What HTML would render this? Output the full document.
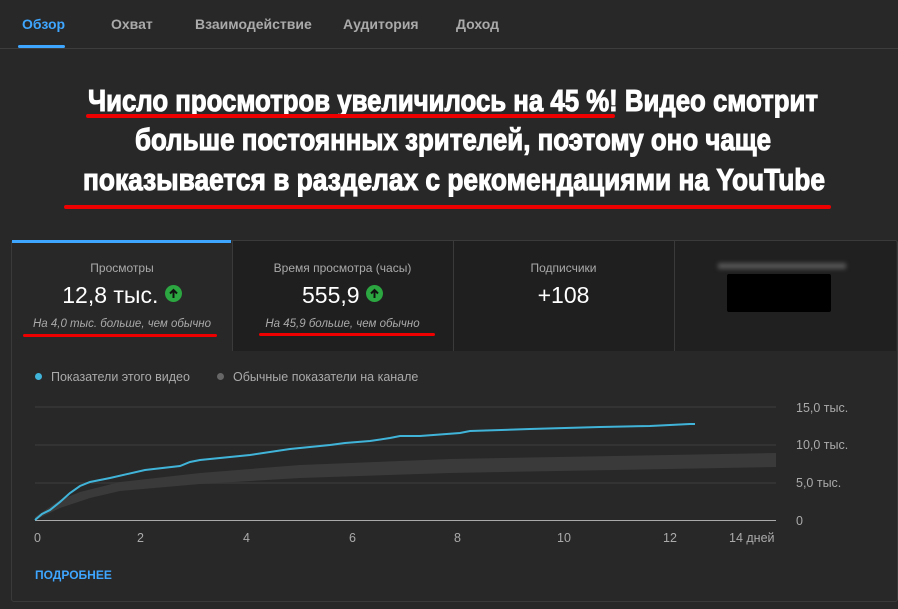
<!DOCTYPE html>
<html><head><meta charset="utf-8"><style>
body{margin:0;background:#282828;width:898px;height:609px;overflow:hidden;font-family:"Liberation Sans",sans-serif;color:#fff;position:relative}
.abs{position:absolute}
.tab{position:absolute;top:16px;font-size:14px;font-weight:bold;color:#aaa}
.hl{font-family:"Liberation Sans",sans-serif;font-weight:700;font-size:31px;fill:#fff;stroke:#fff;stroke-width:1.1px}
</style></head><body>
<div class="tab" style="left:22px;color:#3ea6ff">Обзор</div>
<div class="tab" style="left:111px">Охват</div>
<div class="tab" style="left:195px">Взаимодействие</div>
<div class="tab" style="left:343px">Аудитория</div>
<div class="tab" style="left:456px">Доход</div>
<div class="abs" style="left:18px;top:45px;width:47px;height:3px;background:#3ea6ff;border-radius:2px"></div>
<div class="abs" style="left:0;top:48px;width:898px;height:1px;background:#3d3d3d"></div>

<svg class="abs" style="left:0;top:0" width="898" height="240">
<text class="hl" x="88" y="111" textLength="730" lengthAdjust="spacingAndGlyphs">Число просмотров увеличилось на 45 %! Видео смотрит</text>
<text class="hl" x="135" y="150" textLength="636" lengthAdjust="spacingAndGlyphs">больше постоянных зрителей, поэтому оно чаще</text>
<text class="hl" x="83" y="190" textLength="742" lengthAdjust="spacingAndGlyphs">показывается в разделах с рекомендациями на YouTube</text>
<rect x="86" y="114" width="529" height="4" rx="2" fill="#e00"/>
<rect x="64" y="205" width="767" height="4" rx="2" fill="#e00"/>
</svg>

<div class="abs" style="left:11px;top:240px;width:885px;height:360px;border:1px solid #3a3a3a;border-radius:3px;background:#282828"></div>
<div class="abs" style="left:232px;top:241px;width:221px;height:110px;background:#1f1f1f;border-left:1px solid #3a3a3a"></div>
<div class="abs" style="left:453px;top:241px;width:221px;height:110px;background:#1f1f1f;border-left:1px solid #3a3a3a"></div>
<div class="abs" style="left:674px;top:241px;width:221px;height:110px;background:#202020;border-left:1px solid #3a3a3a"></div>
<div class="abs" style="left:12px;top:240px;width:219px;height:3px;background:#3ea6ff"></div>

<div class="abs" style="left:12px;top:261px;width:220px;text-align:center;font-size:12px;color:#aaa">Просмотры</div>
<div class="abs" style="left:12px;top:282px;width:220px;text-align:center;font-size:23px">12,8 тыс. <span style="display:inline-block;width:17px;height:17px;border-radius:50%;background:#2ba640;vertical-align:1px;position:relative"><svg width="17" height="17" style="position:absolute;left:0;top:0"><path d="M8.5 13V5M5 8.5l3.5-3.5 3.5 3.5" stroke="#111" stroke-width="2" fill="none"/></svg></span></div>
<div class="abs" style="left:12px;top:318px;width:220px;text-align:center;font-size:11.5px;font-style:italic;color:#aaa">На 4,0 тыс. больше, чем обычно</div>
<div class="abs" style="left:23px;top:334px;width:194px;height:3px;background:#e00;border-radius:2px"></div>

<div class="abs" style="left:232px;top:261px;width:221px;text-align:center;font-size:12px;color:#aaa">Время просмотра (часы)</div>
<div class="abs" style="left:232px;top:282px;width:221px;text-align:center;font-size:23px">555,9 <span style="display:inline-block;width:17px;height:17px;border-radius:50%;background:#2ba640;vertical-align:1px;position:relative"><svg width="17" height="17" style="position:absolute;left:0;top:0"><path d="M8.5 13V5M5 8.5l3.5-3.5 3.5 3.5" stroke="#111" stroke-width="2" fill="none"/></svg></span></div>
<div class="abs" style="left:232px;top:318px;width:221px;text-align:center;font-size:11.5px;font-style:italic;color:#aaa">На 45,9 больше, чем обычно</div>
<div class="abs" style="left:259px;top:333px;width:176px;height:3px;background:#e00;border-radius:2px"></div>

<div class="abs" style="left:453px;top:261px;width:221px;text-align:center;font-size:12px;color:#aaa">Подписчики</div>
<div class="abs" style="left:453px;top:282px;width:221px;text-align:center;font-size:23px">+108</div>

<div class="abs" style="left:718px;top:263px;width:128px;height:6px;background:#555;filter:blur(2px)"></div>
<div class="abs" style="left:727px;top:274px;width:104px;height:38px;background:#000;border-radius:2px"></div>

<div class="abs" style="left:35px;top:373px;width:7px;height:7px;border-radius:50%;background:#41b4d9"></div>
<div class="abs" style="left:51px;top:370px;font-size:12.5px;color:#aaa">Показатели этого видео</div>
<div class="abs" style="left:217px;top:373px;width:7px;height:7px;border-radius:50%;background:#666"></div>
<div class="abs" style="left:233px;top:370px;font-size:12.5px;color:#aaa">Обычные показатели на канале</div>

<svg class="abs" style="left:0;top:0" width="898" height="609">
<g stroke="#333" stroke-width="2"><line x1="35" y1="407" x2="776" y2="407"/><line x1="35" y1="445" x2="776" y2="445"/><line x1="35" y1="483" x2="776" y2="483"/></g>
<path d="M35 517 L60 500 L80 492 L120 482 L200 473 L300 465 L450 459 L776 453 L776 467 L450 473 L300 478 L200 484 L120 491 L90 498 L60 508 L35 520Z" fill="#3a3a3a"/>
<line x1="35" y1="520.5" x2="776" y2="520.5" stroke="#aaa" stroke-width="1"/>
<polyline fill="none" stroke="#41b4d9" stroke-width="2" points="35,520 42,514 50,510 60,502 70,493 80,486 90,482 110,478 145,470 180,466 190,462 200,460 250,455 290,449 300,448 330,445 345,443 370,441 390,438 400,436 420,436 460,433 470,431 530,429 600,427 650,426 690,424 695,424"/>
<g fill="#aaa" font-family="Liberation Sans, sans-serif" font-size="12.5">
<text x="34" y="542">0</text><text x="137" y="542">2</text><text x="243" y="542">4</text><text x="349" y="542">6</text><text x="454" y="542">8</text><text x="557" y="542">10</text><text x="663" y="542">12</text><text x="729" y="542">14 дней</text>
<text x="796" y="412">15,0 тыс.</text><text x="796" y="449">10,0 тыс.</text><text x="796" y="487">5,0 тыс.</text><text x="796" y="525">0</text>
</g>
</svg>
<div class="abs" style="left:35px;top:568px;font-size:12px;font-weight:bold;color:#3ea6ff">ПОДРОБНЕЕ</div>
</body></html>
